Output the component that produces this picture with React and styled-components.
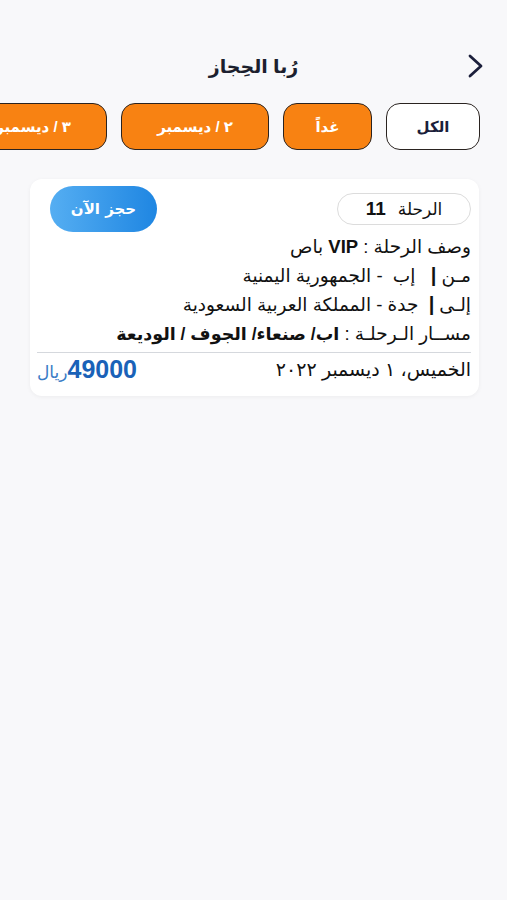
import React from "react"
import styled, { createGlobalStyle } from "styled-components"

const GlobalStyle = createGlobalStyle`
	html, body {
		margin: 0;
		padding: 0;
		background: #f8f8fa;
	}
	body {
		font-family: "Liberation Sans", "DejaVu Sans", sans-serif;
		color: #111;
	}
`

const chips = [
	{ label: "الكل", width: 94, active: true },
	{ label: "غداً", width: 89 },
	{ label: "٢ / ديسمبر", width: 148 },
	{ label: "٣ / ديسمبر", width: 148 },
	{ label: "٤ / ديسمبر", width: 148 },
]

export default function App() {
	return (
		<Page dir="rtl">
			<GlobalStyle />
			<StatusBar />
			<Header>
				<BackButton aria-label="back">
					<svg width="18" height="26" viewBox="0 0 18 26" fill="none">
						<path d="M3 3 L14 13 L3 23" stroke="#1c1f3b" strokeWidth="2.8" strokeLinecap="round" strokeLinejoin="round" />
					</svg>
				</BackButton>
				<Title>رُبا الحِجاز</Title>
				<span />
			</Header>
			<ChipRow>
				{chips.map((c) => (
					<Chip key={c.label} $width={c.width} $active={c.active}>{c.label}</Chip>
				))}
			</ChipRow>
			<TripCard>
				<CardTop>
					<TripPill>
						<span>الرحلة</span>
						<b>11</b>
					</TripPill>
					<BookButton>حجز الآن</BookButton>
				</CardTop>
				<InfoLine>وصف الرحلة : <strong>VIP</strong> باص</InfoLine>
				<InfoLine>مـن <Bar>|</Bar>&nbsp;&nbsp; إب &nbsp;- الجمهورية اليمنية</InfoLine>
				<InfoLine>إلـى <Bar>|</Bar>&nbsp; جدة - المملكة العربية السعودية</InfoLine>
				<InfoLine>مســار الـرحلـة : <Route>اب/ صنعاء/ الجوف / الوديعة</Route></InfoLine>
				<Divider />
				<CardFooter>
					<DateText>الخميس، ١ ديسمبر ٢٠٢٢</DateText>
					<Price>
						<b>49000</b>
						<span>ريال</span>
					</Price>
				</CardFooter>
			</TripCard>
		</Page>
	)
}

const Page = styled.div`
	width: 100%;
	min-height: 900px;
	background: #f8f8fa;
	overflow: hidden;
`

const StatusBar = styled.div`
	height: 40px;
`

const Header = styled.div`
	display: grid;
	grid-template-columns: 1fr auto 1fr;
	align-items: center;
	height: 52px;
	padding: 0 20px;
`

const BackButton = styled.button`
	justify-self: start;
	display: flex;
	align-items: center;
	background: none;
	border: none;
	padding: 0;
	margin-right: 2px;
`

const Title = styled.div`
	font-size: 19px;
	font-weight: 600;
	color: #1c1f2e;
`

const ChipRow = styled.div`
	display: flex;
	gap: 14px;
	padding: 11px 27px 0 0;
	overflow: hidden;
	white-space: nowrap;
`

const Chip = styled.div`
	flex: 0 0 auto;
	width: ${(p) => p.$width}px;
	height: 47px;
	box-sizing: border-box;
	display: flex;
	align-items: center;
	justify-content: center;
	border: 1px solid #2a2320;
	border-radius: 14px;
	background: ${(p) => (p.$active ? "#ffffff" : "#f88212")};
	color: ${(p) => (p.$active ? "#1c1f3b" : "#ffffff")};
	font-size: 15px;
	font-weight: 700;
`

const TripCard = styled.div`
	margin: 29px 28px 0 30px;
	background: #ffffff;
	border-radius: 12px;
	box-shadow: 0 1px 4px rgba(0, 0, 0, 0.05);
	padding: 7px 8px 10px 7px;
`

const CardTop = styled.div`
	display: flex;
	align-items: center;
	justify-content: space-between;
	height: 46px;
`

const TripPill = styled.div`
	width: 134px;
	height: 32px;
	box-sizing: border-box;
	display: flex;
	align-items: center;
	justify-content: center;
	gap: 12px;
	border: 1px solid #dcdcdc;
	border-radius: 16px;
	font-size: 17px;
	b {
		font-size: 19px;
	}
`

const BookButton = styled.button`
	width: 107px;
	height: 46px;
	margin-left: 13px;
	border: none;
	border-radius: 23px;
	background: linear-gradient(90deg, #55aef2 0%, #1f86e2 100%);
	color: #ffffff;
	font-family: "DejaVu Sans", sans-serif;
	font-size: 15px;
	font-weight: 700;
`

const InfoLine = styled.div`
	font-size: 18.5px;
	line-height: 29px;
	color: #111;
	white-space: nowrap;
	strong {
		font-weight: 700;
	}
`

const Route = styled.span`
	font-size: 17.5px;
	font-weight: 700;
`

const Bar = styled.span`
	font-weight: 700;
	font-size: 20px;
`

const Divider = styled.div`
	height: 1px;
	background: #d5d8dd;
	margin: 3px 0 0;
`

const CardFooter = styled.div`
	display: flex;
	align-items: center;
	justify-content: space-between;
	height: 33px;
`

const DateText = styled.div`
	font-size: 19px;
	color: #111;
`

const Price = styled.div`
	display: flex;
	align-items: baseline;
	b {
		font-size: 25px;
		font-weight: 700;
		color: #1a62b8;
	}
	span {
		font-size: 17px;
		color: #3a7cc6;
	}
`
